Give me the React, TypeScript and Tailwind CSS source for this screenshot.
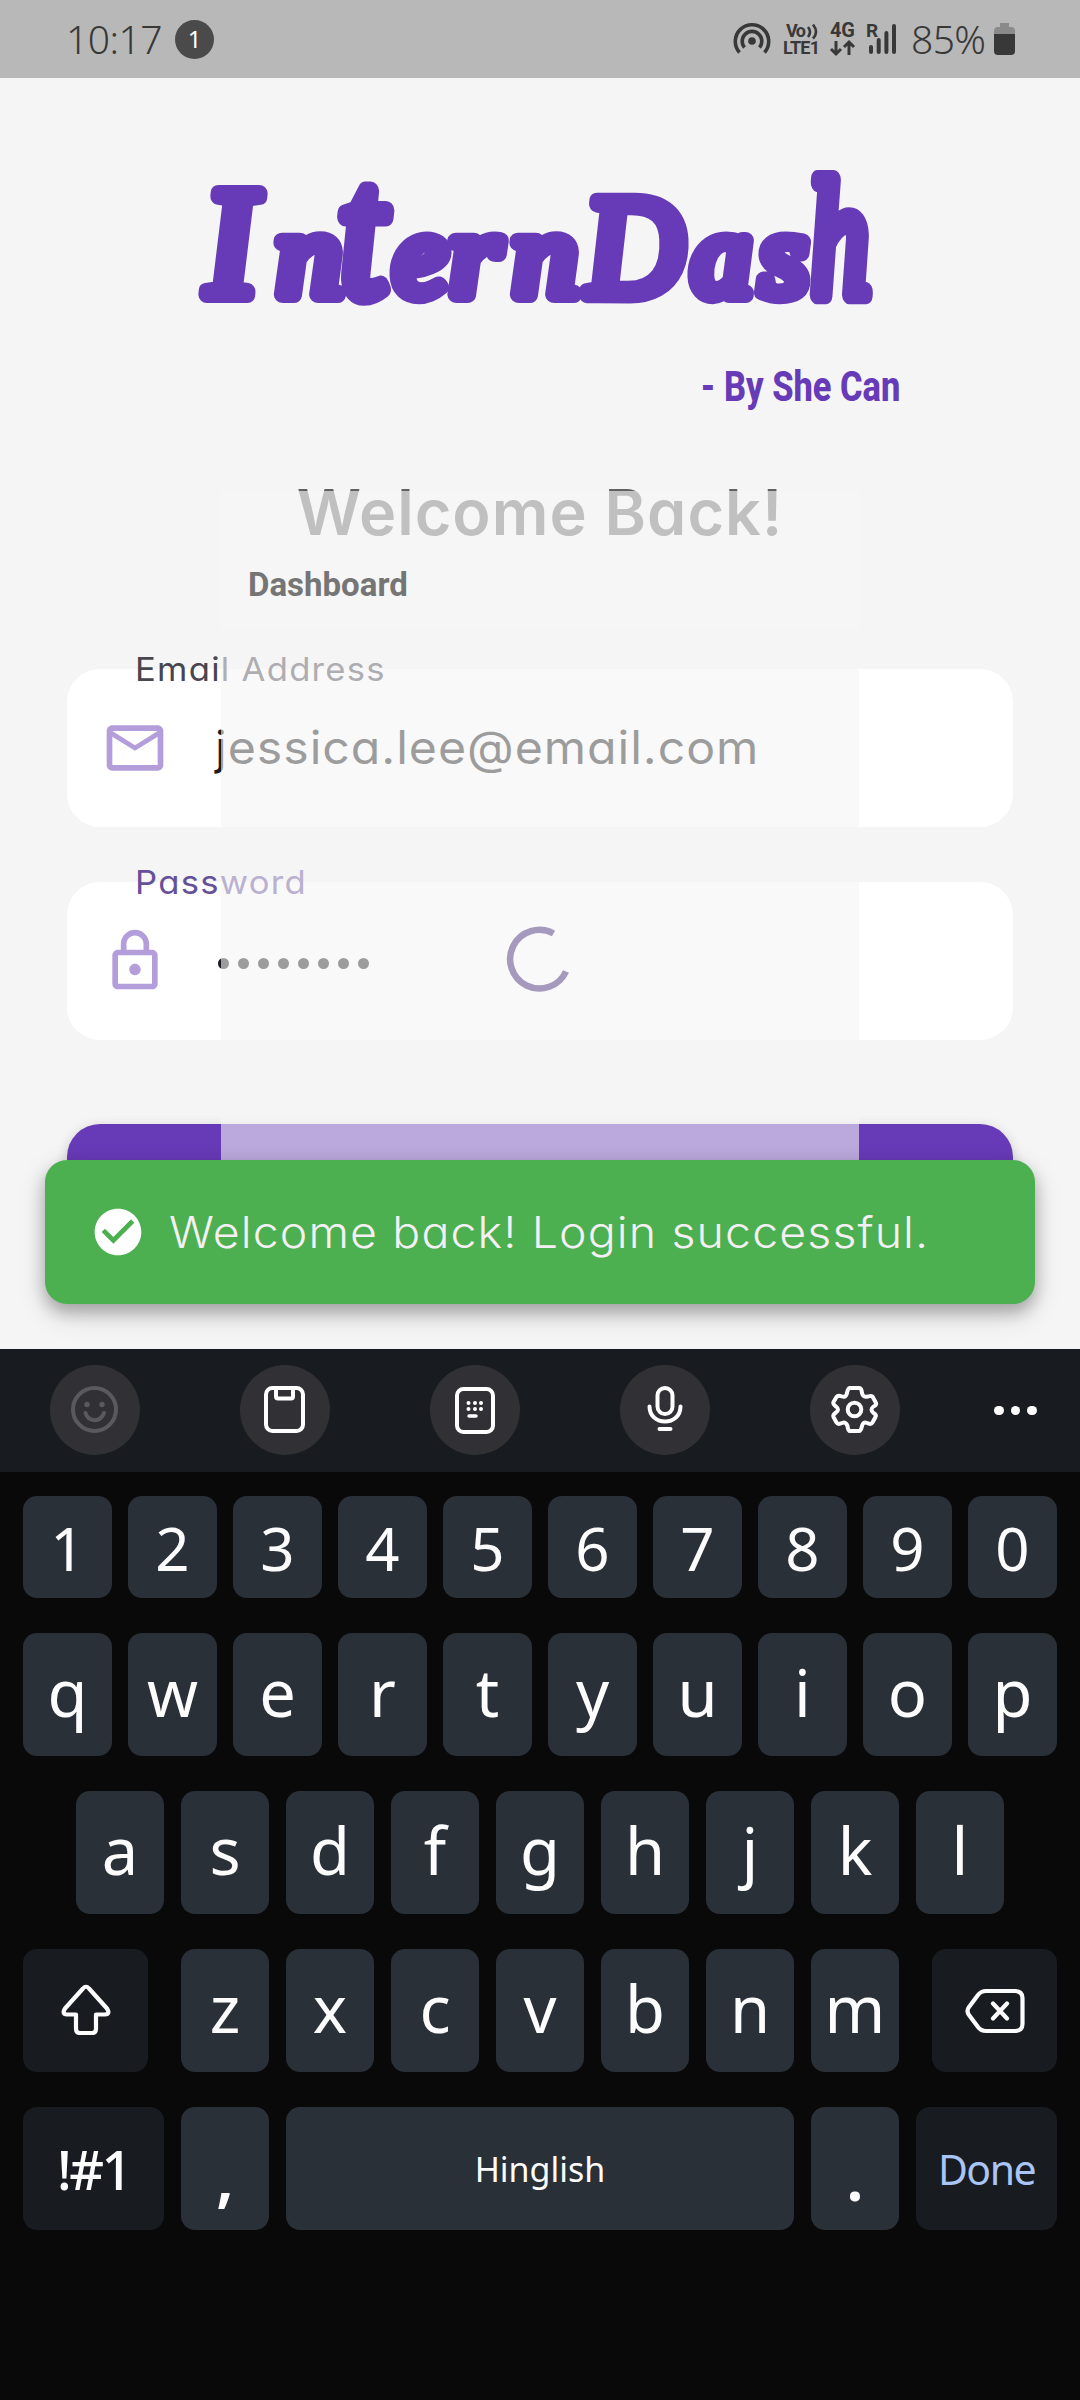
import type { ReactNode } from "react";

const poppins = "font-['Inter'] [font-feature-settings:'cv11','ss03']";

function StatusBar() {
  return (
    <div className="flex h-[78px] items-center bg-[#b8b8b8] pl-[66px] font-['Noto_Sans',sans-serif] text-[#383838]">
      <span className="w-[109px] text-[39px] font-[340] leading-[76px] tracking-[-0.500px]">10:17</span>
      <span className="flex size-[39px] items-center justify-center rounded-full bg-[#4a4a4a] text-[24px] leading-none text-white">1</span>
      <svg className="ml-[519px] h-[78px] w-[168px]" viewBox="733 0 168 78" fill="none" stroke="#383838">
        <circle cx="752" cy="41" r="3.8" fill="#383838" stroke="none" />
        <path d="M744.5 47.5a9.8 9.8 0 1 1 15 0" strokeWidth="3.6" />
        <path d="M739.5 52.5a16.7 16.7 0 1 1 25 0" strokeWidth="3.6" />
        <g fill="#383838" stroke="none" fontFamily="Roboto, sans-serif" fontWeight="700">
          <text x="786" y="37" fontSize="18" textLength="20">Vo</text>
          <text x="783" y="54" fontSize="18" textLength="37">LTE1</text>
          <text x="830" y="37" fontSize="20" textLength="25">4G</text>
          <text x="866" y="37" fontSize="19">R</text>
        </g>
        <path d="M808 27q4 5 0 10M813 24.500q6 7.500 0 14" strokeWidth="2.600" />
        <path d="M836 41v13m-5-5 5 5 5-5M849 55v-13m-5 5 5-5 5 5" strokeWidth="3" />
        <path d="M871 47v5M878.700 40v12M886.400 33v19M894 26v26" strokeWidth="4" strokeLinecap="round" />
      </svg>
      <span className="ml-[10px] w-[83px] text-[39px] font-[340] leading-[76px] tracking-[-0.600px]">85%</span>
      <svg className="h-[32px] w-[21px]" viewBox="0 0 21 32">
        <path d="M6 0h9v4h2q4 0 4 4v3H0V8q0-4 4-4h2z" fill="#8a8a8a" />
        <path d="M0 11h21v17q0 4-4 4H4q-4 0-4-4z" fill="#383838" />
      </svg>
    </div>
  );
}

const wordmark = [
  { ch: "I", x: 207, size: 156, sx: 1.0, sy: 1 },
  { ch: "n", x: 278, size: 118, sx: 1.1, sy: 1 },
  { ch: "t", x: 342, size: 164, sx: 1, sy: 1.13 },
  { ch: "e", x: 395, size: 118, sx: 1.02, sy: 1 },
  { ch: "r", x: 451, size: 118, sx: 1.12, sy: 1 },
  { ch: "n", x: 514, size: 118, sx: 1.1, sy: 1 },
  { ch: "D", x: 588, size: 141, sx: 0.96, sy: 1.02 },
  { ch: "a", x: 693, size: 118, sx: 1.02, sy: 1 },
  { ch: "s", x: 761, size: 118, sx: 1.05, sy: 1 },
  { ch: "h", x: 812, size: 145, sx: 0.82, sy: 1.15 },
];

function Logo() {
  return (
    <svg className="mx-auto mt-[72px] block h-[170px] w-[740px] overflow-visible" viewBox="170 150 740 170" aria-label="InternDash">
      <g
        fontFamily="'Liberation Serif', serif"
        fontStyle="italic"
        fill="#673ab7"
        stroke="#673ab7"
        strokeWidth="16"
        strokeLinejoin="round"
        strokeLinecap="round"
      >
        {wordmark.map((l) => (
          <text key={l.x} fontSize={l.size} transform={`translate(${l.x} 295) skewX(3) scale(${l.sx} ${l.sy})`}>{l.ch}</text>
        ))}
      </g>
    </svg>
  );
}

function Field({ label, tone, className, children }: { label: string; tone: string; className: string; children: ReactNode }) {
  return (
    <div className={`relative mx-[67px] flex h-[158px] items-center rounded-[33px] bg-white pl-[34px] ${className}`}>
      <span className={`absolute left-[68px] top-[-20px] origin-left scale-x-[1.05] whitespace-nowrap text-[33px] leading-[40px] tracking-[1.200px] ${poppins} ${tone}`}>{label}</span>
      {children}
    </div>
  );
}

function LoginScreen() {
  return (
    <div className="relative h-[1271px] overflow-hidden bg-[#f5f5f5]">
      <Logo />
      <div className="mr-[180px] mt-[42px] flex h-[50px] justify-end">
        <span className="origin-right scale-x-[0.8] whitespace-nowrap font-['Roboto',sans-serif] text-[43px] font-extrabold leading-[48px] text-[#673ab7]">- By She Can</span>
      </div>
      <h1 className={`mt-[68px] h-[64px] whitespace-nowrap text-center text-[63px] font-[560] leading-[64px] tracking-[1px] text-[#616161] ${poppins}`}>Welcome Back!</h1>

      <Field label="Email Address" tone="text-[#49454f]" className="mt-[125px]">
        <svg className="size-[68px]" viewBox="0 0 24 24" fill="#b39ddb">
          <path d="M22 6c0-1.100-.9-2-2-2H4c-1.100 0-2 .9-2 2v12c0 1.100.9 2 2 2h16c1.100 0 2-.9 2-2V6zm-2 0-8 5-8-5h16zm0 12H4V8l8 5 8-5v10z" />
        </svg>
        <span className={`-mt-[2px] ml-[46px] origin-left scale-x-[1.05] whitespace-nowrap text-[46px] leading-[58px] tracking-[0.900px] text-[#1c1b1f] ${poppins}`}>jessica.lee@email.com</span>
      </Field>

      <Field label="Password" tone="text-[#65509a]" className="mt-[55px]">
        <svg className="size-[68px]" viewBox="0 0 24 24" fill="#b39ddb">
          <path d="M18 8h-1V6c0-2.760-2.240-5-5-5S7 3.240 7 6v2H6c-1.100 0-2 .9-2 2v10c0 1.100.9 2 2 2h12c1.100 0 2-.9 2-2V10c0-1.100-.9-2-2-2zM9 6c0-1.660 1.340-3 3-3s3 1.340 3 3v2H9V6zm9 14H6V10h12v10zm-6-3c1.100 0 2-.9 2-2s-.9-2-2-2-2 .9-2 2 .9 2 2 2z" />
        </svg>
        <div className="ml-[49px] mt-[4px] flex gap-[9px]">
          {Array.from({ length: 8 }, (_, i) => (
            <span key={i} className="size-[11px] rounded-full bg-[#1c1b1f]" />
          ))}
        </div>
      </Field>

      <div className="mx-[67px] mt-[84px] h-[157px] rounded-[33px] bg-[#673ab7] shadow-[0_4px_14px_rgba(0,0,0,0.2)]" />

      {/* Incoming dashboard page, still fading in over the form */}
      <div className="absolute left-[221px] top-[413px] h-[858px] w-[638px] bg-[#f5f5f5]/[0.592]">
        <div className="h-[138px] bg-white/[0.12] pl-[27px] pt-[74px]">
          <span className="block font-['Roboto',sans-serif] text-[33px] font-bold leading-[40px] text-[#757575]">Dashboard</span>
        </div>
        <svg className="absolute left-[285px] top-[435px] size-[66px]" viewBox="-33 -33 66 66" fill="none">
          <path d="M14.500-25.500A29.300 29.300 0 1 0 27 12.500" stroke="#a599bd" strokeWidth="6.500" />
        </svg>
      </div>

      <div className="absolute inset-x-[45px] top-[1082px] flex h-[144px] items-center rounded-[22px] bg-[#4caf50] pl-[45px] shadow-[0_8px_16px_rgba(0,0,0,0.24),0_10px_28px_rgba(0,0,0,0.16)]">
        <svg className="size-[56px]" viewBox="0 0 24 24" fill="#ffffff">
          <path d="M12 2C6.480 2 2 6.480 2 12s4.480 10 10 10 10-4.480 10-10S17.520 2 12 2zm-2 15-5-5 1.410-1.410L10 14.170l7.590-7.590L19 8l-9 9z" />
        </svg>
        <span className={`ml-[23px] origin-left scale-x-[1.08] whitespace-nowrap text-[43px] font-[360] leading-[60px] tracking-[1.050px] text-[#f4eff4] ${poppins}`}>Welcome back! Login successful.</span>
      </div>
    </div>
  );
}

function ToolButton({ children, muted = false }: { children: ReactNode; muted?: boolean }) {
  return (
    <div className="flex size-[90px] items-center justify-center rounded-full bg-[#303035]">
      <svg className="size-[60px]" viewBox="-30 -30 60 60" fill="none" stroke={muted ? "#5a5a5d" : "#ffffff"} strokeWidth="4" strokeLinecap="round" strokeLinejoin="round">
        {children}
      </svg>
    </div>
  );
}

function Toolbar() {
  return (
    <div className="flex h-[123px] items-center gap-[100px] bg-[#181b20] pb-px pl-[50px]">
      <ToolButton muted>
        <circle cx="-0.500" cy="-0.500" r="21.500" />
        <circle cx="-8" cy="-5.500" r="2.700" fill="#5a5a5d" stroke="none" />
        <circle cx="7" cy="-5.500" r="2.700" fill="#5a5a5d" stroke="none" />
        <path d="M-9.500 3c3 9.500 15 9.500 18.500 0" />
      </ToolButton>
      <ToolButton>
        <rect x="-19" y="-22" width="37" height="43" rx="6.500" />
        <path d="M-9-21v7.500q0 2 2 2H6q2 0 2-2V-21" />
      </ToolButton>
      <ToolButton>
        <rect x="-18" y="-21" width="36" height="43" rx="6.500" />
        <g fill="#ffffff" stroke="none">
          {[-6.5, 0, 6].map((x) => (
            <g key={x}>
              <circle cx={x} cy="-7" r="2" />
              <circle cx={x} cy="-1" r="2" />
            </g>
          ))}
        </g>
        <path d="M-6 6h7" strokeWidth="3.500" />
      </ToolButton>
      <ToolButton>
        <rect x="-7.500" y="-22" width="15" height="26" rx="7.500" />
        <path d="M-15.500-3.500c0 20 31 20 31 0M-5.500 19H5.500" />
      </ToolButton>
      <ToolButton>
        <circle cx="-0.500" cy="-0.500" r="6.800" />
        <path d="M-5.500-22H4.500Q6.500-22 7-17Q8-12 13-13.500Q17-15 18-12.500L21-7Q22-5 18.500-3.500Q14.500-.5 18.500 3Q22 5 20.500 7L17.500 12.500Q16 15 12 13Q8 11.500 7 16Q6 21 4 21H-5Q-7 21-7.500 16Q-9 11.500-13 13Q-17 15-18.500 12.500L-21.500 7Q-22.500 5-19 2.500Q-15-.5-19-3.500Q-22.500-6-21.500-8L-18.500-13Q-17-15-13-13.500Q-9-12-8-17Q-7-22-5.500-22Z" />
      </ToolButton>
      <div className="-ml-[6px] flex gap-[7px] pt-px">
        <span className="size-[9.500px] rounded-full bg-white" />
        <span className="size-[9.500px] rounded-full bg-white" />
        <span className="size-[9.500px] rounded-full bg-white" />
      </div>
    </div>
  );
}

function Key({ children, className = "w-[89px] pb-[4px]" }: { children: ReactNode; className?: string }) {
  return <div className={`flex h-[123px] items-center justify-center rounded-[14px] bg-[#2a3038] text-[65px] leading-none ${className}`}>{children}</div>;
}

function DarkKey({ children, className }: { children: ReactNode; className: string }) {
  return <div className={`flex h-[123px] items-center justify-center rounded-[14px] bg-[#181b20] ${className}`}>{children}</div>;
}

function Keyboard() {
  return (
    <div className="h-[1051px] bg-[#090909] font-['Noto_Sans',sans-serif] text-[#fcfcfc]">
      <Toolbar />
      <div className="flex flex-col gap-[35px] px-[23px] pt-[24px]">
        <div className="flex gap-[16px]">
          {[..."1234567890"].map((c) => (
            <div key={c} className="flex h-[102px] w-[89px] items-center justify-center rounded-[14px] bg-[#2a3038] pt-px text-[60px] leading-none">{c}</div>
          ))}
        </div>
        <div className="flex gap-[16px]">
          {[..."qwertyuiop"].map((c) => <Key key={c}>{c}</Key>)}
        </div>
        <div className="flex justify-center gap-[17px]">
          {[..."asdfghjkl"].map((c) => <Key key={c} className="w-[88px] pb-[4px]">{c}</Key>)}
        </div>
        <div className="flex justify-between">
          <DarkKey className="w-[125px]">
            <svg className="h-[56px] w-[56px]" viewBox="-28 -28 56 56" fill="none" stroke="#fcfcfc" strokeWidth="4.200" strokeLinejoin="round">
              <path d="M-3-22.500Q0-26 3-22.500L21-2.500Q24.500 3 19 3.500H10V18Q10 22 6 22H-6Q-10 22-10 18V3.500H-19Q-24.500 3-21-2.500Z" />
            </svg>
          </DarkKey>
          <div className="flex gap-[17px]">
            {[..."zxcvbnm"].map((c) => <Key key={c} className="w-[88px] pb-[4px]">{c}</Key>)}
          </div>
          <DarkKey className="w-[125px]">
            <svg className="h-[50px] w-[64px]" viewBox="-32 -25 64 50" fill="none" stroke="#fcfcfc" strokeWidth="4.200" strokeLinejoin="round" strokeLinecap="round">
              <path d="M-9-20H20Q27.500-20 27.500-13V13Q27.500 20 20 20H-9Q-14 20-17 16L-26 4Q-29 0-26-4L-17-16Q-14-20-9-20ZM-2-7.500 12 7.500M12-7.500-2 7.500" />
            </svg>
          </DarkKey>
        </div>
        <div className="flex gap-[17px]">
          <DarkKey className="w-[141px] text-[54px] font-medium leading-none tracking-[-2.500px]">!#1</DarkKey>
          <Key className="w-[88px] pt-[16px] font-semibold">,</Key>
          <div className="flex h-[123px] w-[508px] items-center justify-center rounded-[14px] bg-[#2a3038] pt-px text-[34px] leading-none">Hinglish</div>
          <Key className="w-[88px] pt-[16px] font-semibold">.</Key>
          <DarkKey className="w-[141px] pt-[2px] text-[41px] leading-none tracking-[-1.500px] text-[#a9c5f5]">Done</DarkKey>
        </div>
      </div>
    </div>
  );
}

export default function App() {
  return (
    <div className="h-[2400px] w-[1080px] overflow-hidden bg-[#f5f5f5]">
      <StatusBar />
      <LoginScreen />
      <Keyboard />
    </div>
  );
}
